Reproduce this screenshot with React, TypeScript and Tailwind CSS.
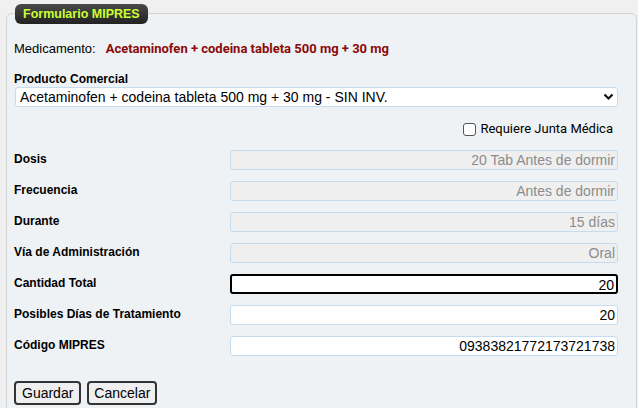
import React from "react";

const font = { fontFamily: '"Liberation Sans", Arial, sans-serif' };

function Row({ label, value, disabled, focused }: { label: string; value: string; disabled?: boolean; focused?: boolean }) {
  return (
    <div className="flex items-start h-[31px]">
      <div className="w-[216px] text-[12px] font-bold text-black leading-[14px]">{label}</div>
      <div
        className={
          "w-[388px] h-[20px] -mt-[2px] rounded-[3px] text-right pr-[2px] text-[14px] leading-[18px] " +
          (focused
            ? "border-2 border-black bg-white text-black leading-[16px] pr-[1px]"
            : disabled
            ? "border border-[#c5dcef] bg-[#efefef] text-[#8c8c8c]"
            : "border border-[#c5dcef] bg-white text-black")
        }
      >
        {value}
      </div>
    </div>
  );
}

export default function App() {
  return (
    <div className="w-[638px] h-[408px] bg-[#f0f0f0] overflow-hidden relative" style={font}>
      <div className="absolute left-[6px] top-[13px] w-[631px] h-[420px] border border-[#d4d4d4] rounded-[6px] bg-[#eef2f4]">
        <div className="absolute left-[8px] -top-[10px] h-[20px] px-[8px] rounded-[6px] bg-gradient-to-b from-[#4a4a4a] to-[#222] text-[#ccff33] text-[12.5px] font-bold leading-[20px]">
          Formulario MIPRES
        </div>
        <div className="pl-[7px] pt-[27px]">
          <div className="flex text-[13px] leading-[15px]">
            <span className="text-black">Medicamento:</span>
            <span className="ml-[10px] font-bold text-[#8b0a0a]" style={{ fontFamily: "Roboto, sans-serif" }}>
              Acetaminofen + codeina tableta 500 mg + 30 mg
            </span>
          </div>
          <div className="mt-[16px] text-[12px] font-bold leading-[14px]">Producto Comercial</div>
          <div className="mt-[1px] w-[603px] h-[20px] ml-[1px] bg-white border border-[#c5dcef] rounded-[3px] flex items-center justify-between pl-[4px] pr-[3px] text-[14px]">
            <span>Acetaminofen + codeina tableta 500 mg + 30 mg - SIN INV.</span>
            <svg width="11" height="8" viewBox="0 0 11 8">
              <path d="M1.5 1.5 L5.5 5.5 L9.5 1.5" stroke="#111" strokeWidth="2.2" fill="none" />
            </svg>
          </div>
          <div className="flex justify-end items-center mt-[15px] pr-[23px] text-[13px] leading-[14px]" style={{ fontFamily: "Roboto, sans-serif" }}>
            <span className="w-[13px] h-[13px] border border-[#555] rounded-[3px] bg-white mr-[4px]" />
            <span>Requiere Junta Médica</span>
          </div>
          <div className="mt-[16px]">
            <Row label="Dosis" value="20 Tab Antes de dormir" disabled />
            <Row label="Frecuencia" value="Antes de dormir" disabled />
            <Row label="Durante" value="15 días" disabled />
            <Row label="Vía de Administración" value="Oral" disabled />
            <Row label="Cantidad Total" value="20" focused />
            <Row label="Posibles Días de Tratamiento" value="20" />
            <Row label="Código MIPRES" value="09383821772173721738" />
          </div>
          <div className="flex gap-[6px] mt-[12px]">
            <button className="h-[24px] px-[6px] border-2 border-[#333] rounded-[4px] bg-[#efefef] text-[14px] leading-[18px]">Guardar</button>
            <button className="h-[24px] px-[5px] border-2 border-[#333] rounded-[4px] bg-[#efefef] text-[14px] leading-[18px]">Cancelar</button>
          </div>
        </div>
      </div>
    </div>
  );
}
